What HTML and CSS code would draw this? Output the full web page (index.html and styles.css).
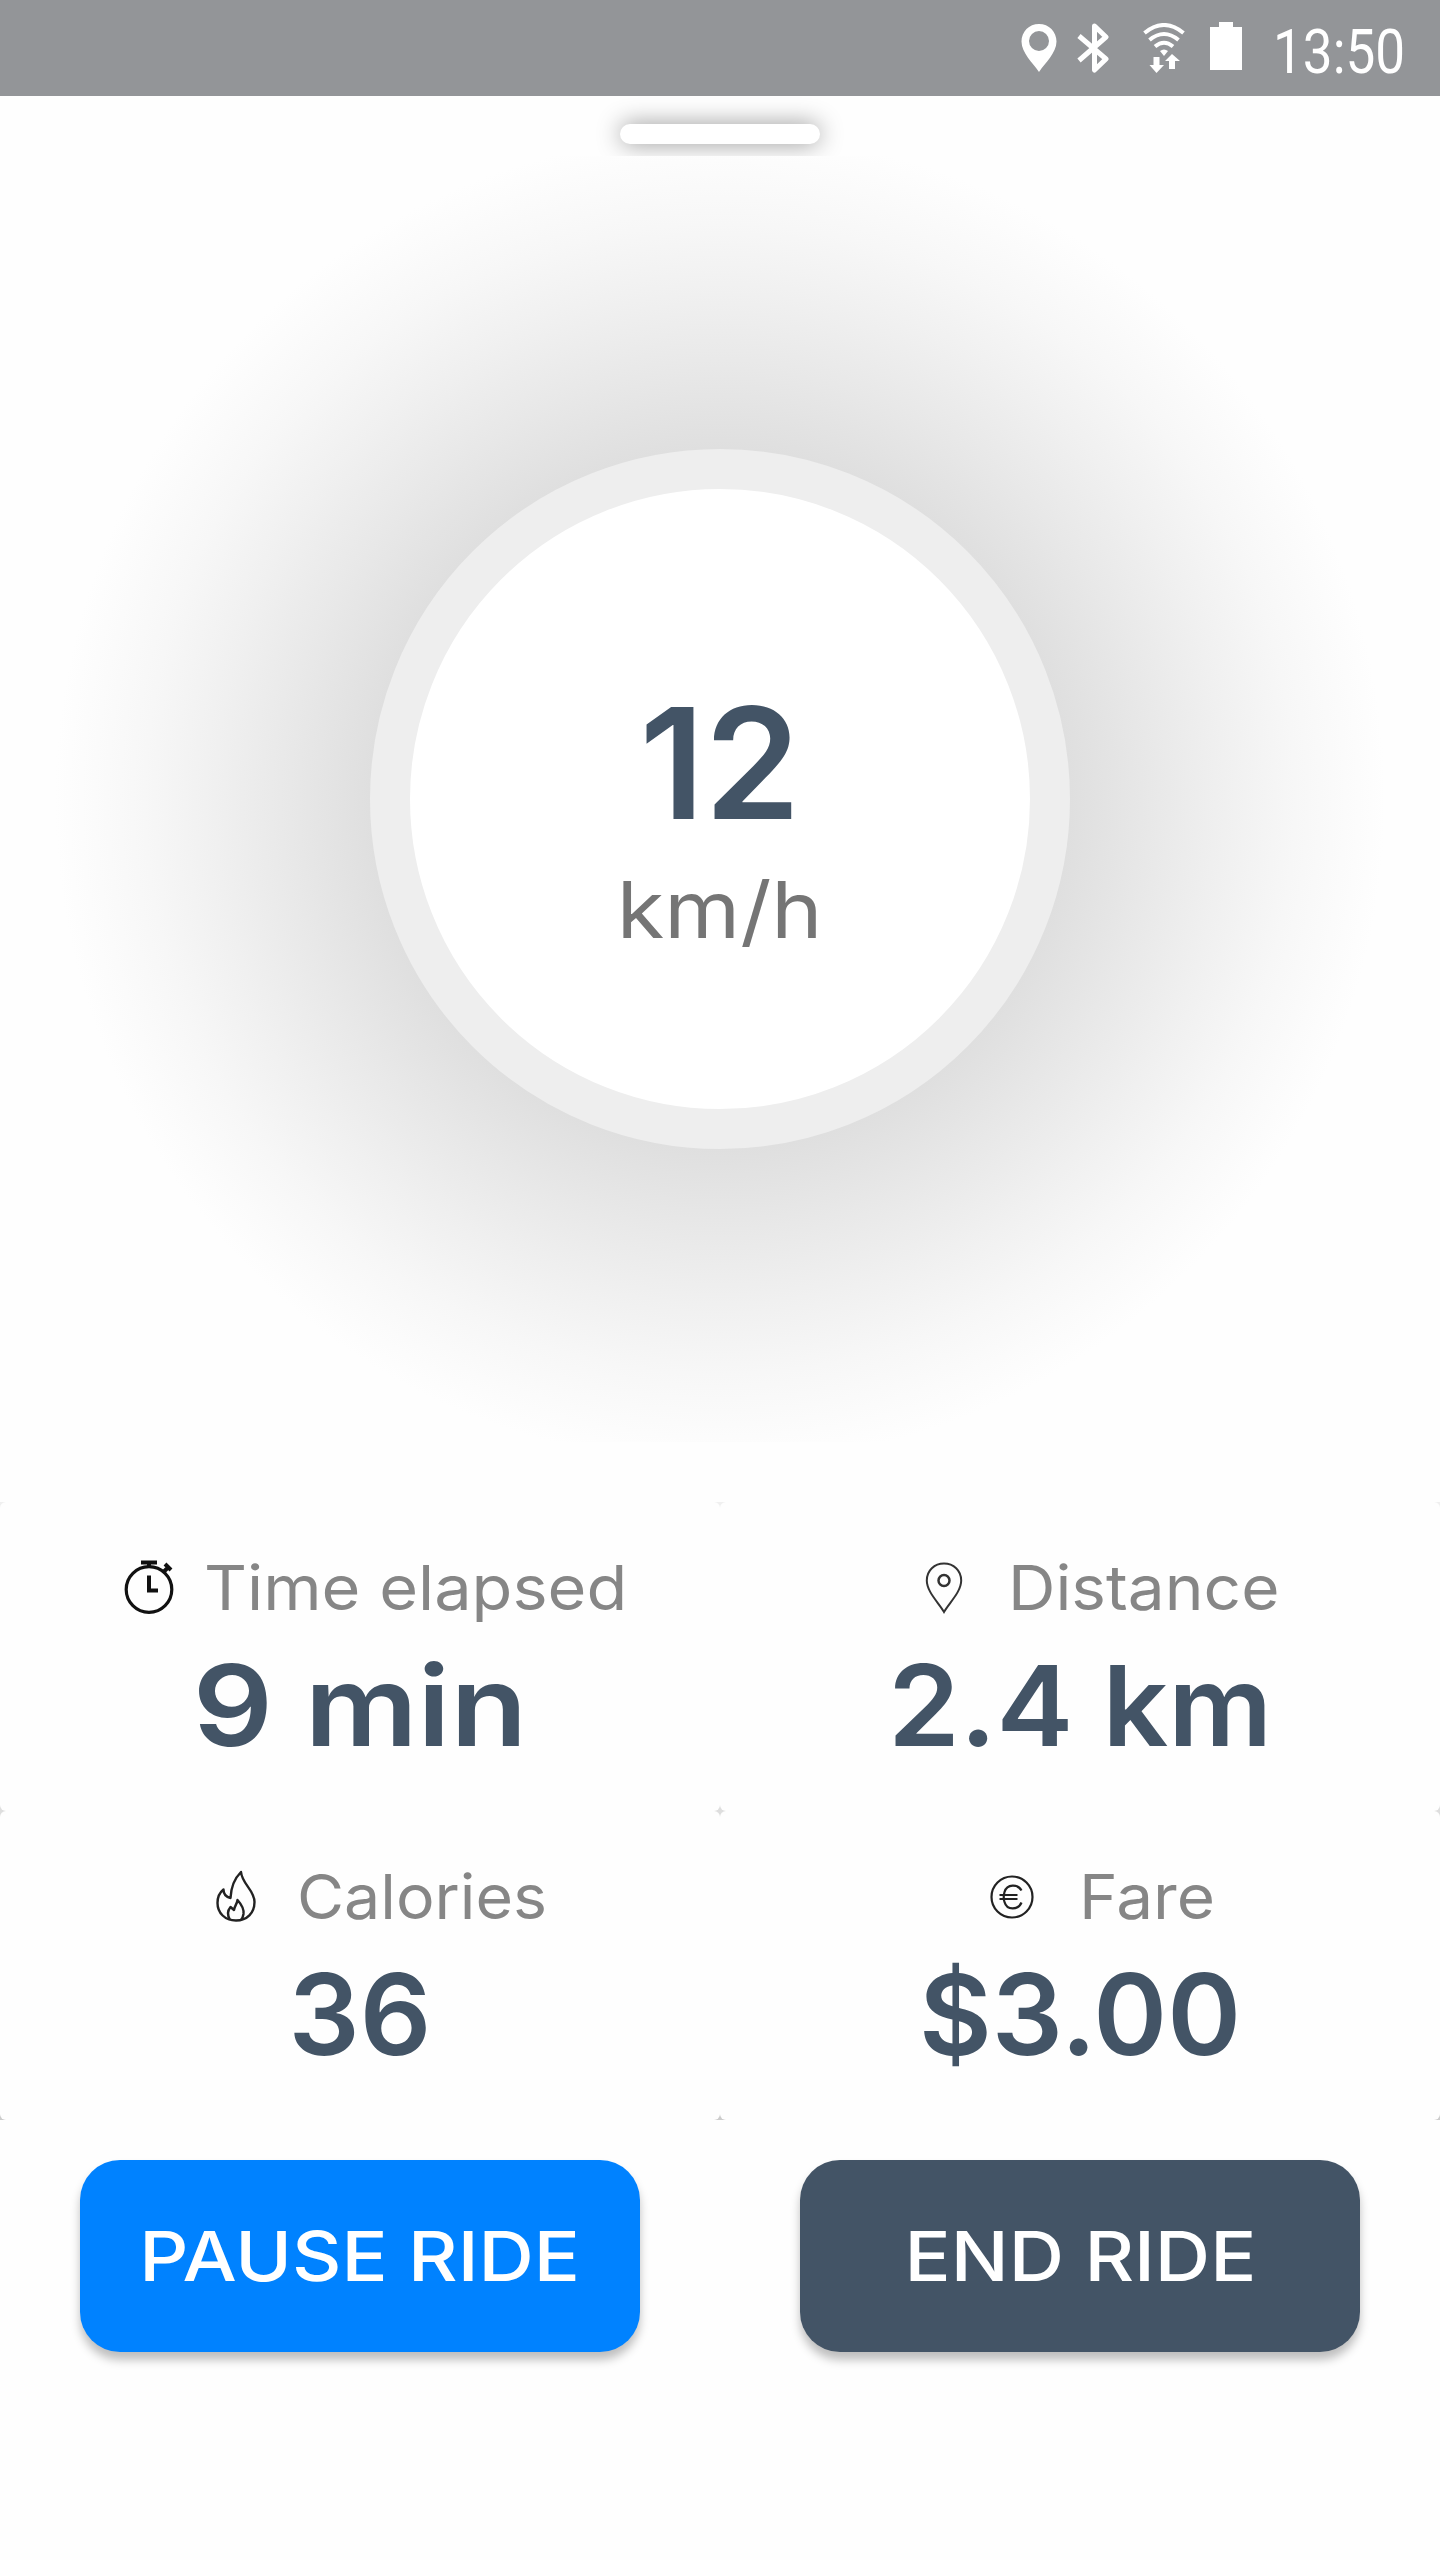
FILE: index.html
```html
<!DOCTYPE html>
<html lang="en">

<head>
    <meta charset="UTF-8">
    <meta name="viewport" content="width=device-width, initial-scale=1.0">
    <title>Current Ride</title>
    <link rel="stylesheet" href="styles.css">
</head>

<body>
    <div class="status-bar">
        <svg class="status-pin" width="36" height="48" viewBox="0 0 36 48">
            <path fill="#fff" fill-rule="evenodd" d="M18 0C8 0 .5 7.700.5 17.500C.5 29 12 39 18 48C24 39 35.500 29 35.500 17.500C35.500 7.700 28 0 18 0ZM18 7a10 10 0 1 1 0 20a10 10 0 1 1 0-20Z"/>
        </svg>
        <svg class="status-bluetooth" width="34" height="50" viewBox="0 0 34 50">
            <path fill="none" stroke="#fff" stroke-width="5" stroke-linejoin="round" d="M2 13L29 36L17.500 47V3L29 14L2 37.500"/>
        </svg>
        <svg class="status-wifi" width="42" height="50" viewBox="0 0 42 50">
            <g fill="none" stroke="#fff" stroke-width="4">
                <path d="M1.500 10Q21-6 40.500 10"/>
                <path d="M6.500 17Q21 5 35.500 17"/>
                <path d="M12 23.500Q21 16 30 23.500"/>
            </g>
            <path fill="#fff" d="M17 28q4-3 8 0l-4 5zM10.500 34h6v8h4.500L13.500 50L6.500 42h4zM26 46h6v-8h5L29 31l-7 7h4z"/>
        </svg>
        <svg class="status-battery" width="32" height="48" viewBox="0 0 32 48">
            <path fill="#fff" d="M9 0h14v5h9v43H0V5h9z"/>
        </svg>
        <span class="clock">13:50</span>
    </div>

    <div class="handle-area">
        <div class="handle"></div>
    </div>

    <div class="speed-area">
        <div class="speed-circle">
            <span class="speed">12</span>
            <span class="unit">km/h</span>
        </div>
    </div>

    <div class="stats">
        <div class="card time">
            <div class="label">
                <svg class="icon" width="60" height="60" viewBox="0 0 60 60">
                    <g fill="none" stroke="#111" stroke-width="3.200">
                        <circle cx="30" cy="31.500" r="22.800"/>
                        <path d="M22 4.500h16M30 5v5M44 14.500l5-5M46 6l6 6M30 17.500v15h9" stroke-width="4"/>
                    </g>
                </svg>
                <span class="name">Time elapsed</span>
            </div>
            <div class="value">9 min</div>
        </div>
        <div class="card distance">
            <div class="label">
                <svg class="icon" width="60" height="60" viewBox="0 0 60 60">
                    <g fill="none" stroke="#333" stroke-width="2">
                        <path d="M30 54C25 45 12.800 34 12.800 22.500C12.800 12.500 20.500 5.500 30 5.500S47.200 12.500 47.200 22.500C47.200 34 35 45 30 54Z"/>
                        <circle cx="30" cy="22.500" r="5.500" stroke-width="2.500"/>
                    </g>
                </svg>
                <span class="name">Distance</span>
            </div>
            <div class="value">2.4 km</div>
        </div>
        <div class="card calories">
            <div class="label">
                <svg class="icon" width="60" height="60" viewBox="0 0 60 60">
                    <g fill="none" stroke="#222" stroke-width="2.400" stroke-linejoin="round">
                        <path d="M35 5C28 12 25 20 24.500 31C20 30 17.500 26.500 17.500 22.500C13 26 11.500 32 11.500 36C11.500 46 19 53.500 30 53.500S48.500 46 48.500 35C48.500 23 36 17 35 5Z"/>
                        <path d="M24 53C20.500 47 22 43 24.500 40L28 43C29 38 31 37 31.500 33C36 38 38 43 37.500 47C37 50 36.500 51.500 35 53"/>
                    </g>
                </svg>
                <span class="name">Calories</span>
            </div>
            <div class="value">36</div>
        </div>
        <div class="card fare">
            <div class="label">
                <svg class="icon" width="60" height="60" viewBox="0 0 60 60">
                    <g fill="none" stroke="#222" stroke-width="2.200">
                        <circle cx="30" cy="30" r="20.500"/>
                        <path d="M39.500 23.500C36 17 25 16.500 22.500 25C21.500 28.500 21.500 32 22.500 35C25 44 36.500 43 39.500 35.500M17.500 28h18M17.500 32h18"/>
                    </g>
                </svg>
                <span class="name">Fare</span>
            </div>
            <div class="value">$3.00</div>
        </div>
    </div>

    <div class="buttons">
        <button class="button pause"><span>PAUSE RIDE</span></button>
        <button class="button end"><span>END RIDE</span></button>
    </div>
</body>

</html>
```
FILE: styles.css
```css
* {
    box-sizing: border-box;
}

body {
    margin: 0;
    min-height: 2560px;
    background-color: #fefefe;
    font-family: Inter, sans-serif;
}

.status-bar {
    display: flex;
    align-items: flex-start;
    height: 96px;
    padding: 22px 0 0 1021px;
    background-color: #939598;
}

.status-bar svg {
    flex: none;
}

.status-pin {
    margin-top: 2px;
}

.status-bluetooth {
    margin: 1px 0 0 20px;
}

.status-wifi {
    margin: 1px 0 0 32px;
}

.status-battery {
    margin-left: 25px;
}

.clock {
    flex: none;
    margin-left: 31px;
    color: white;
    font-family: Roboto, sans-serif;
    font-size: 61px;
    line-height: 60px;
    transform: scaleX(0.87);
    transform-origin: left;
}

.handle-area {
    height: 60px;
    padding-top: 28px;
    overflow: hidden; /* cuts the shadow off below the handle */
}

.handle {
    width: 200px;
    height: 20px;
    margin: 0 auto;
    border-radius: 10px;
    background-color: white;
    box-shadow: 0 0 24px rgba(0, 0, 0, 0.42);
}

.speed-area {
    display: flex;
    justify-content: center;
    align-items: center;
    height: 1286px;
    background: radial-gradient(circle at center, #dfdfdf 350px, #e8e8e8 430px, #f0f0f0 505px, #f7f7f7 575px, #fbfbfb 625px, #fefefe 665px);
}

.speed-circle {
    display: flex;
    flex-direction: column;
    align-items: center;
    width: 700px;
    height: 700px;
    padding-top: 197px;
    border: 40px solid #eeeeee;
    border-radius: 50%;
    background-color: white;
}

.speed {
    color: #435466;
    font-size: 154px;
    font-weight: 600;
    line-height: 154px;
}

.unit {
    margin-top: 31px;
    color: #757575;
    font-size: 78px;
    line-height: 78px;
    transform: scaleX(1.11);
}

.stats {
    display: grid;
    grid-template-columns: 1fr 1fr;
    grid-auto-rows: 309px;
    margin-top: 60px;
    background: linear-gradient(#f0f0f0, #cccccc);
}

.card {
    padding-top: 55px;
    border-radius: 6px;
    background-color: #fefefe;
}

.label {
    display: flex;
    align-items: center;
    height: 62px;
}

.icon {
    flex: none;
}

.name {
    color: #868686;
    font-size: 62px;
    line-height: 62px;
    white-space: nowrap;
    transform: scaleX(1.06);
    transform-origin: left;
}

.time .label {
    padding-left: 119px;
    gap: 25px;
}

.time .name {
    transform: scaleX(1.075);
}

.distance .label {
    padding-left: 194px;
    gap: 34px;
}

.calories .label {
    padding-left: 206px;
    gap: 31px;
}

.calories .name {
    transform: scaleX(1.04);
}

.fare .label {
    padding-left: 262px;
    gap: 37px;
}

.value {
    margin-top: 30px;
    color: #435466;
    font-size: 112px;
    font-weight: 560;
    line-height: 112px;
    text-align: center;
}

.time .value {
    transform: scaleX(1.12);
}

.distance .value {
    transform: scaleX(1.03);
}

.buttons {
    display: grid;
    grid-template-columns: 560px 560px;
    gap: 160px;
    padding: 40px 80px;
}

.button {
    height: 192px;
    padding: 0;
    border: none;
    border-radius: 40px;
    color: white;
    font-family: Inter, sans-serif;
    font-size: 69px;
    font-weight: 500;
    box-shadow: 0 8px 10px rgba(0, 0, 0, 0.25);
    cursor: pointer;
}

.button span {
    display: inline-block;
    transform: scaleX(1.11);
}

.pause {
    background-color: #0082ff;
}

.end {
    background-color: #435466;
}
```
